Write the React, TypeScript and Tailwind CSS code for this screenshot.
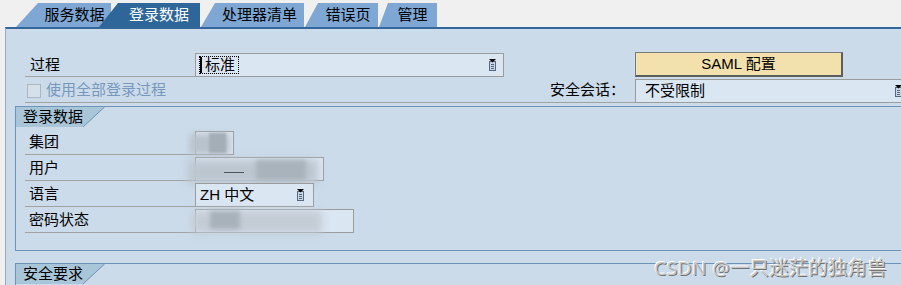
import React from "react";

function DropIcon() {
  return (
    <svg width="9" height="12" viewBox="0 0 9 12" className="shrink-0">
      <rect x="1.5" y="2.5" width="6" height="9" fill="#c9d6e6" stroke="#56677e" />
      <path d="M3 5.5h3M3 7.5h3M3 9.5h3" stroke="#56677e" />
      <path d="M1 0h7l-3.5 3.5z" fill="#000" />
    </svg>
  );
}

function Tab({ label, className }: { label: string; className: string }) {
  return (
    <div className={"h-[24px] flex items-center justify-center text-[15px] " + className}>
      {label}
    </div>
  );
}

function GroupHeader({ label }: { label: string }) {
  return (
    <div className="relative h-[20px] w-[89px]">
      <div className="h-full w-full bg-[#a9c6d8] pl-[7px] pt-[1px] flex items-center text-[15px] [clip-path:polygon(0_0,100%_0,67px_100%,0_100%)]">
        {label}
      </div>
      <svg className="absolute left-0 top-0" width="89" height="20">
        <line x1="88.5" y1="0" x2="67" y2="20" stroke="#6f93b9" />
      </svg>
    </div>
  );
}

function Row({ label, children, inputClass }: { label: string; children?: React.ReactNode; inputClass: string }) {
  return (
    <div className="flex items-end h-[26px]">
      <div className="w-[170px] h-full border-b border-[#a2a2a2] pl-[4px] pt-[2px] flex items-center">{label}</div>
      <div className={"relative h-[24px] border border-[#9c9c9c] bg-[#dbe6f3] flex items-center " + inputClass}>
        {children}
      </div>
    </div>
  );
}

export default function App() {
  return (
    <div className="relative w-[901px] h-[285px] overflow-hidden bg-[#f0f0f0] text-black [font-family:'Liberation_Sans','Noto_Sans_CJK_SC',sans-serif]">
      {/* tab strip */}
      <div className="flex h-[27px] pt-[3px]">
        <Tab label="服务数据" className="ml-[16px] w-[95px] pl-[22px] bg-[#7fa7d4] [clip-path:polygon(22px_0,100%_0,100%_100%,0_100%)]" />
        <Tab label="登录数据" className="relative z-10 -ml-[12px] w-[101px] pl-[19px] bg-[#2f6699] text-white [clip-path:polygon(19px_0,100%_0,100%_100%,0_100%)]" />
        <Tab label="处理器清单" className="ml-[1px] w-[103px] pl-[14px] bg-[#7fa7d4] [clip-path:polygon(14px_0,100%_0,100%_100%,0_100%)]" />
        <Tab label="错误页" className="ml-[1px] w-[73px] pl-[13px] bg-[#7fa7d4] [clip-path:polygon(13px_0,100%_0,100%_100%,0_100%)]" />
        <Tab label="管理" className="ml-[1px] w-[58px] pl-[9px] bg-[#7fa7d4] [clip-path:polygon(9px_0,100%_0,100%_100%,0_100%)]" />
      </div>

      <div className="flex h-[258px]">
        <div className="w-[5px] shrink-0" />
        <div className="flex-1 bg-[#cbdbea] border-t-2 border-t-[#33679c] border-l border-l-[#9aabbd] text-[15px]">
          {/* top section */}
          <div className="pl-[19px] pt-[23px]">
            <div className="flex items-end h-[25px]">
              <div className="w-[170px] h-[24px] border-b border-[#a2a2a2] pl-[5px] pt-[2px] flex items-center">过程</div>
              <div className="w-[309px] h-[24px] border border-[#9c9c9c] bg-[#dbe6f3] flex items-center pl-[3px] pr-[6px]">
                <div className="flex items-center h-[18px] border border-dotted border-black pr-[3px]">
                  <div className="w-[2px] h-[16px] bg-black mr-[3px]" />
                  标准
                </div>
                <div className="ml-auto">
                  <DropIcon />
                </div>
              </div>
              <div className="ml-[131px] self-start w-[208px] h-[25px] bg-[#f3e1ad] border border-[#7a7a7a] border-r-2 border-b-2 border-r-[#5e5e5e] border-b-[#5e5e5e] flex items-center justify-center">
                SAML 配置
              </div>
            </div>

            <div className="flex items-end h-[26px]">
              <div className="w-[610px] h-full border-b border-[#a2a2a2] pt-[2px] flex items-center">
                <div className="ml-[2px] w-[14px] h-[14px] border border-[#aab6c2] bg-[#d6e0ea]" />
                <span className="ml-[5px] text-[#7898bb]">使用全部登录过程</span>
                <span className="ml-auto pr-[10px]">安全会话：</span>
              </div>
              <div className="w-[277px] h-[24px] border border-[#9c9c9c] bg-[#dbe6f3] flex items-center pl-[9px] pr-[8px]">
                不受限制
                <div className="ml-auto">
                  <DropIcon />
                </div>
              </div>
            </div>
          </div>

          {/* group: 登录数据 */}
          <div className="ml-[9px] mt-[3px] border-t border-l border-b border-[#6f93b9] pb-[17px]">
            <GroupHeader label="登录数据" />
            <div className="pl-[9px] mt-[2px]">
              <Row label="集团" inputClass="w-[39px]">
                <div className="absolute -left-[6px] top-[2px] w-[40px] h-[20px] bg-[#b8c2cb] blur-[3px]" />
                <div className="absolute left-[13px] top-[1px] w-[17px] h-[20px] bg-[#a4aeb7] blur-[1px]" />
              </Row>
              <Row label="用户" inputClass="w-[129px]">
                <div className="absolute -left-[8px] top-[2px] w-[130px] h-[24px] bg-[#bcc6cf] blur-[4px]" />
                <div className="absolute left-[60px] top-[2px] w-[50px] h-[20px] bg-[#a9b3bc] blur-[2px]" />
                <div className="absolute left-[28px] top-[14px] w-[20px] h-[1px] bg-[#4a5560]" />
              </Row>
              <Row label="语言" inputClass="w-[119px] pl-[4px] pr-[8px]">
                ZH 中文
                <div className="ml-auto">
                  <DropIcon />
                </div>
              </Row>
              <Row label="密码状态" inputClass="w-[159px]">
                <div className="absolute -left-[4px] top-[1px] w-[130px] h-[22px] bg-[#c3ccd4] blur-[4px]" />
                <div className="absolute left-[14px] top-[1px] w-[30px] h-[18px] bg-[#a8b2bb] blur-[2px]" />
              </Row>
            </div>
          </div>

          {/* group: 安全要求 */}
          <div className="ml-[9px] mt-[12px] h-[30px] border-t border-l border-[#6f93b9]">
            <GroupHeader label="安全要求" />
          </div>
        </div>
      </div>

      <div className="absolute right-[14px] top-[254px] text-[19px] tracking-[0.6px] text-[#c8c8c8] [text-shadow:1px_1px_0_#737373,-1px_-1px_0_#ffffff] [font-family:'Open_Sans','Noto_Sans_CJK_SC',sans-serif]">
        CSDN @一只迷茫的独角兽
      </div>
    </div>
  );
}
